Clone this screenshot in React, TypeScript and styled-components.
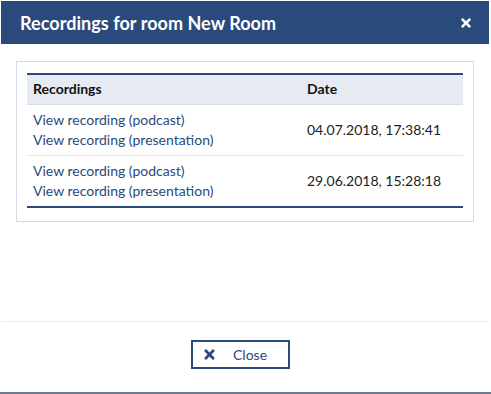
import { createGlobalStyle } from "styled-components";
import styled from "styled-components";
import { FaTimes } from "react-icons/fa";

const GlobalStyle = createGlobalStyle`
  html, body {
    margin: 0;
    padding: 0;
    background: #ffffff;
  }
  body {
    font-family: Lato, "Open Sans", "Liberation Sans", sans-serif;
    color: #222;
  }
`;

const recordings = [
  { date: "04.07.2018, 17:38:41" },
  { date: "29.06.2018, 15:28:18" },
];

const App = () => {
  return (
    <>
      <GlobalStyle />
      <Page>
        <Modal>
          <Header>
            <Title>Recordings for room New Room</Title>
            <HeaderClose aria-label="Close">
              <FaTimes />
            </HeaderClose>
          </Header>

          <Body>
            <Card>
              <Table>
                <thead>
                  <tr>
                    <Th>Recordings</Th>
                    <Th>Date</Th>
                  </tr>
                </thead>
                <tbody>
                  {recordings.map((r) => (
                    <Row key={r.date}>
                      <Td>
                        <Link href="#">View recording (podcast)</Link>
                        <Link href="#">View recording (presentation)</Link>
                      </Td>
                      <Td>{r.date}</Td>
                    </Row>
                  ))}
                </tbody>
              </Table>
            </Card>
          </Body>

          <Footer>
            <CloseButton>
              <FaTimes />
              <span>Close</span>
            </CloseButton>
          </Footer>
        </Modal>
        <BottomStrip />
      </Page>
    </>
  );
};

export default App;

/* page frame */
const Page = styled.div`
  display: flex;
  flex-direction: column;
  width: 491px;
  height: 394px;
  overflow: hidden;
`;

const Modal = styled.div`
  display: flex;
  flex-direction: column;
  margin: 1px 2px 0 1px;
  height: 391px;
  background: #fff;
`;

const BottomStrip = styled.div`
  height: 2px;
  background: #6e7a90;
`;

/* header */
const Header = styled.div`
  display: flex;
  align-items: center;
  justify-content: space-between;
  height: 43px;
  padding: 0 16px 0 19px;
  background: #2a4a7c;
  flex-shrink: 0;
`;

const Title = styled.h1`
  margin: 0;
  font-size: 18px;
  font-weight: 700;
  color: #fff;
  letter-spacing: 0.05px;
`;

const HeaderClose = styled.button`
  display: flex;
  align-items: center;
  padding: 0;
  border: 0;
  background: none;
  color: #fff;
  font-size: 14px;
  cursor: pointer;
`;

/* body */
const Body = styled.div`
  flex: 1;
  padding: 17px 15px 0 15px;
`;

const Card = styled.div`
  border: 1px solid #d5dbe5;
  padding: 11px 10px 13px 10px;
`;

const Table = styled.table`
  width: 100%;
  border-collapse: collapse;
  border-top: 2px solid #2a4a7c;
  border-bottom: 2px solid #2a4a7c;
  font-size: 14px;
`;

const Th = styled.th`
  text-align: left;
  font-weight: 700;
  color: #111;
  background: #e6eaf1;
  height: 27px;
  padding: 0 6px 2px 6px;
  border-bottom: 1px solid #d8dde5;
  &:first-child {
    width: 262px;
  }
`;

const Row = styled.tr`
  & + & td {
    border-top: 1px solid #e2e5ea;
  }
`;

const Td = styled.td`
  padding: 5px 6px 5px 6px;
  height: 40px;
  line-height: 20px;
  color: #222;
  vertical-align: middle;
`;

const Link = styled.a`
  display: block;
  color: #2a4a7c;
  text-decoration: none;
`;

/* footer */
const Footer = styled.div`
  display: flex;
  justify-content: center;
  align-items: flex-start;
  height: 71px;
  padding-top: 18px;
  box-sizing: border-box;
  border-top: 1px solid #ebebeb;
  flex-shrink: 0;
`;

const CloseButton = styled.button`
  display: flex;
  align-items: center;
  gap: 16px;
  width: 99px;
  height: 29px;
  margin-right: 9px;
  padding: 0 9px;
  border: 2px solid #2a4a7c;
  background: #fff;
  color: #2a4a7c;
  font-family: Lato, "Liberation Sans", sans-serif;
  font-size: 14px;
  cursor: pointer;
  svg {
    font-size: 15px;
  }
`;
